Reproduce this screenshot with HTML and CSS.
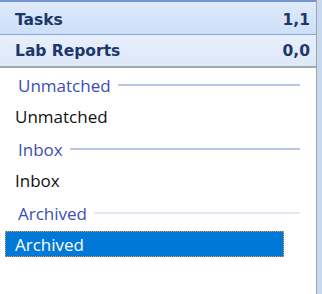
FILE: index.html
```html
<html>
  <head>
    <title>Folders</title>
    <link rel="stylesheet" href="styles.css">
  </head>
  <body>
    <div class="frame">
      <section class="pane">
        <header class="bar bar-tasks">
          <span>Tasks</span>
          <span>1,1</span>
        </header>
        <header class="bar bar-labs">
          <span>Lab Reports</span>
          <span>0,0</span>
        </header>
        <main class="list">
          <div class="group">
            <span>Unmatched</span>
            <i class="rule"></i>
          </div>
          <div class="item"><span>Unmatched</span></div>
          <div class="group">
            <span>Inbox</span>
            <i class="rule"></i>
          </div>
          <div class="item"><span>Inbox</span></div>
          <div class="group">
            <span>Archived</span>
            <i class="rule faint"></i>
          </div>
          <div class="item selected"><span>Archived</span></div>
        </main>
      </section>
      <aside class="edge"></aside>
    </div>
  </body>
</html>
```

FILE: styles.css
```css
html,
body {
  padding: 0;
  margin: 0;
  width: 322px;
  height: 294px;
  overflow: hidden;
  background: #fff;
}

.frame {
  display: flex;
  height: 294px;
}

.pane {
  width: 316px;
  display: flex;
  flex-direction: column;
  border-right: 1px solid #a3a3a3;
}

.edge {
  flex: 1;
  background: #c7d9f1;
}

.bar {
  display: flex;
  justify-content: space-between;
  align-items: center;
  padding: 3px 6px 0 15px;
  box-sizing: border-box;
  font-family: "DejaVu Sans", sans-serif;
  font-weight: bold;
  font-size: 15.5px;
  color: #1d3768;
}

.bar-tasks {
  height: 35px;
  border-top: 2px solid #7396d0;
  border-bottom: 1px solid #86a6da;
  background: linear-gradient(#dfeafb, #cddff8);
}

.bar-labs {
  height: 33px;
  padding-top: 1px;
  border-bottom: 2px solid #a6a6a6;
  background: linear-gradient(#e8effb, #dde8f9);
}

.list {
  flex: 1;
  padding-top: 2px;
  font-family: "Open Sans", sans-serif;
  font-size: 17px;
}

.group {
  height: 30px;
  display: flex;
  align-items: center;
  gap: 7px;
  padding: 0 16px 0 18px;
  color: #3c4db5;
}

.rule {
  flex: 1;
  height: 2px;
  background: #b9c5e5;
}

.rule.faint {
  background: #e2e8f5;
}

.item {
  height: 34px;
  display: flex;
  align-items: flex-start;
  padding-left: 5px;
  color: #111;
}

.item span {
  width: 279px;
  height: 26px;
  margin-top: 3px;
  box-sizing: border-box;
  display: flex;
  align-items: center;
  padding-left: 10px;
}

.item.selected span {
  background: #0078d7;
  color: #fff;
  outline: 1px dotted #e8a040;
  outline-offset: -1px;
}
```
